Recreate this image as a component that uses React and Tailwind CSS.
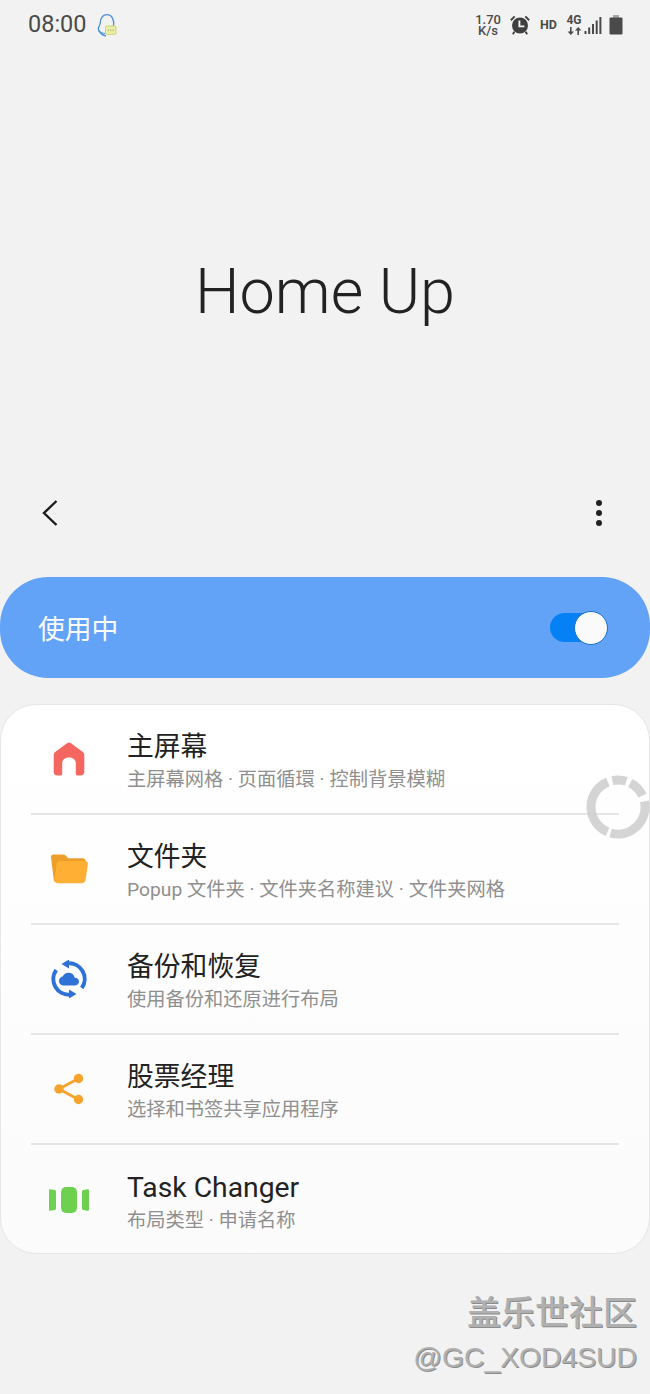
function NotifyIcon() {
  return (
    <svg width="21" height="24" viewBox="0 0 21 24" fill="none">
      <path d="M16.500 13C17.500 7 15 1.700 10 1.700 5 1.700 3.500 6 3.200 10 3 12.500 1.500 14 1.300 15.500 1 17.500 2.500 19 3.500 20 5 22 7 22.500 9 23" stroke="#4a8fd8" strokeWidth="1.300" />
      <path d="M1.500 17c1.500 1.800 3.500 3.200 6.500 3.500" stroke="#3ea6c8" strokeWidth="1" />
      <rect x="8.500" y="13" width="10.500" height="8.300" rx="1.200" fill="#e9eea8" stroke="#cdd370" strokeWidth="1" />
      <circle cx="11.400" cy="17.200" r=".6" fill="#9aa04e" />
      <circle cx="13.700" cy="17.200" r=".6" fill="#9aa04e" />
      <circle cx="16" cy="17.200" r=".6" fill="#9aa04e" />
    </svg>
  );
}

function AlarmIcon() {
  return (
    <svg width="22" height="22" viewBox="0 0 22 22" fill="#3f3f3f">
      <circle cx="11" cy="11.500" r="8" />
      <path d="M1.200 5.600 5 1.800l1.300 1.300-3.800 3.800zM20.800 5.600 17 1.800l-1.300 1.300 3.800 3.800zM4.600 17.200l1.600 1.200-1.800 2.400-1.300-1zM17.400 17.200l-1.600 1.200 1.800 2.400 1.300-1z" />
      <path d="M10.400 6.600v5.800h5" fill="none" stroke="#f2f2f2" strokeWidth="1.900" />
    </svg>
  );
}

function DataArrows() {
  return (
    <svg width="15" height="8" viewBox="0 0 15 8" fill="#4a4a4a">
      <path d="M3 0h1.600v4.500H7L3.800 8 .6 4.500H3zM10.400 8h1.600V3.500h2.400L11.200 0 8 3.500h2.400z" />
    </svg>
  );
}

function SignalIcon() {
  return (
    <svg width="18" height="19" viewBox="0 0 18 19" fill="#4a4a4a">
      <rect x="0.500" y="15" width="2" height="3" />
      <rect x="4.200" y="11.500" width="2" height="6.500" />
      <rect x="8" y="8" width="2" height="10" />
      <rect x="11.700" y="4.500" width="2" height="13.500" />
      <rect x="15.400" y="1" width="2" height="17" />
    </svg>
  );
}

function BatteryIcon() {
  return (
    <svg width="14" height="20" viewBox="0 0 14 20">
      <rect x="4" y="0" width="6" height="3" fill="#a8a8a8" />
      <rect x="0.500" y="2.500" width="13" height="17" rx="1" fill="#4a4a4a" />
    </svg>
  );
}

function StatusBar() {
  return (
    <div className="flex h-[50px] items-center justify-between pl-[28px] pr-[27px]">
      <div className="flex items-center gap-[10px]">
        <span className="font-['Roboto'] text-[23.5px] text-[#4a4a4a]">08:00</span>
        <NotifyIcon />
      </div>
      <div className="flex items-center">
        <div className="flex w-[26px] flex-col items-center font-['Roboto'] text-[13px] leading-[11.5px] font-medium text-[#4a4a4a]">
          <span>1.70</span>
          <span>K/s</span>
        </div>
        <div className="ml-[8px]"><AlarmIcon /></div>
        <span className="ml-[9px] font-['Roboto'] text-[12.5px] font-bold text-[#4a4a4a]">HD</span>
        <div className="ml-[9px] flex w-[16px] flex-col items-center gap-[1px] font-['Roboto'] text-[12px] leading-[11px] font-bold text-[#4a4a4a]">
          <span>4G</span>
          <DataArrows />
        </div>
        <div className="ml-[2px]"><SignalIcon /></div>
        <div className="ml-[7px]"><BatteryIcon /></div>
      </div>
    </div>
  );
}

function HomeIcon() {
  return (
    <svg width="32" height="36" viewBox="0 0 32 36">
      <path d="M16 1.500c.8 0 1.400.3 2 .8l11.500 8.400c1.200.9 1.800 2 1.800 3.500v16.600c0 2.200-1.500 3.700-3.700 3.700h-3.100c-1 0-1.700-.7-1.700-1.700V22c0-3-2.400-5.500-6.800-5.500S9.200 19 9.200 22v10.800c0 1-.7 1.700-1.700 1.700H4.400C2.200 34.500.7 33 .7 30.800V14.200c0-1.500.6-2.600 1.800-3.500L14 2.300c.6-.5 1.200-.8 2-.8z" fill="#f4665f" />
    </svg>
  );
}

function FolderIcon() {
  return (
    <svg width="38" height="30" viewBox="0 0 38 30">
      <path d="M1 3.500C.8 1.500 2 .5 3.500.5H13c1.500 0 2.500.7 3.500 1.800l1.700 2H33c1.500 0 2.500 1 2.600 2.500L36 10 6 28C4.500 28 4 27 3.800 26z" fill="#ed9f2c" />
      <path d="M6.500 10.500C6.800 8.200 8 7 10 7h25c2 0 3.200 1.300 2.900 3.300l-2.300 15.500c-.4 2.200-1.700 3.400-3.800 3.400H7.800c-2 0-3.200-1.200-3-3.200z" fill="#ffb034" />
    </svg>
  );
}

function BackupIcon() {
  return (
    <svg width="38" height="38" viewBox="0 0 38 38">
      <path d="M18 3.400A15.600 15.600 0 0 1 31.800 28" fill="none" stroke="#2e72d8" strokeWidth="4" />
      <path d="M20 34.600A15.600 15.600 0 0 1 6.200 10" fill="none" stroke="#2e72d8" strokeWidth="4" />
      <path d="M19 -0.500v9L11.500 4zM19 38.500v-9l7.500 4.500z" fill="#2e72d8" />
      <path d="M14 25.500c-3 0-5-2.100-5-4.600 0-2.300 1.600-4 3.700-4.400.8-2.300 3.200-3.800 5.800-3.800 3.200 0 5.500 2 6.100 4.800 2.500.2 4.400 1.800 4.400 4 0 2.500-2.100 4-4.700 4z" fill="#2e72d8" />
    </svg>
  );
}

function ShareIcon() {
  return (
    <svg width="30" height="32" viewBox="0 0 30 32">
      <path d="M24.500 5.500 5 16l19.500 10.500" fill="none" stroke="#f5a32b" strokeWidth="2.800" />
      <circle cx="24.500" cy="5.500" r="4.700" fill="#f5a32b" />
      <circle cx="5" cy="16" r="4.700" fill="#f5a32b" />
      <circle cx="24.500" cy="26.500" r="4.700" fill="#f5a32b" />
    </svg>
  );
}

function TaskIcon() {
  return (
    <svg width="40" height="26" viewBox="0 0 40 26" fill="#6ed04f">
      <path d="M0 3.500C0 2.500.7 2 1.600 2.200l4.200.8c.7.100 1.200.7 1.200 1.500v17c0 .8-.5 1.400-1.200 1.500l-4.200.8C.7 24 0 23.500 0 22.500z" />
      <rect x="12" y="0" width="16" height="26" rx="5" />
      <path d="M40 3.500c0-1-.7-1.500-1.600-1.300l-4.200.8c-.7.100-1.200.7-1.200 1.500v17c0 .8.500 1.400 1.200 1.500l4.200.8c.9.200 1.600-.3 1.600-1.300z" />
    </svg>
  );
}

const rows = [
  { icon: <HomeIcon />, title: '主屏幕', sub: '主屏幕网格 · 页面循環 · 控制背景模糊' },
  { icon: <FolderIcon />, title: '文件夹', sub: 'Popup 文件夹 · 文件夹名称建议 · 文件夹网格' },
  { icon: <BackupIcon />, title: '备份和恢复', sub: '使用备份和还原进行布局' },
  { icon: <ShareIcon />, title: '股票经理', sub: '选择和书签共享应用程序' },
  { icon: <TaskIcon />, title: 'Task Changer', sub: '布局类型 · 申请名称', latin: true },
];

function SettingRow({ row, last }) {
  return (
    <div className={`mx-[30px] flex h-[110px] items-center ${last ? '' : 'border-b-2 border-[#e6e6e6]'}`}>
      <div className="flex w-[78px] shrink-0 justify-center pr-[2px]">{row.icon}</div>
      <div className="ml-[18px] flex flex-col pt-[3px]">
        <span className={`${row.latin ? 'text-[28.3px]' : 'text-[26.8px]'} leading-[36px] text-[#222222]`}>{row.title}</span>
        <span className="mt-[2px] text-[19.25px] leading-[26px] text-[#8f8f8f]">{row.sub}</span>
      </div>
    </div>
  );
}

// clockwise from the top, centre 32,35
function arc(from, to) {
  const r = 27;
  const point = (deg) => {
    const a = (deg * Math.PI) / 180;
    return `${32 + r * Math.sin(a)} ${35 - r * Math.cos(a)}`;
  };
  const large = (to - from + 360) % 360 > 180 ? 1 : 0;
  return `M${point(from)}A${r} ${r} 0 ${large} 1 ${point(to)}`;
}

// refresh spinner floating over the card edge
function Spinner() {
  return (
    <svg className="absolute left-[586px] top-[772px] opacity-85" width="64" height="70" viewBox="0 0 64 70" fill="none" stroke="#cdcdcd" strokeWidth="9">
      <path d={arc(203, 338)} />
      <path d={arc(78, 196)} />
      <path d={arc(348, 18)} />
      <path d={arc(27, 65)} />
    </svg>
  );
}

export default function App() {
  return (
    <div className="relative h-[1394px] w-[650px] overflow-hidden bg-[#f2f2f2] font-['Roboto','Noto_Sans_CJK_SC',sans-serif]">
      <StatusBar />
      <div className="flex h-[441px] justify-center pt-[195px]">
        <h1 className="font-['Roboto'] text-[63px] font-light text-[#222222]">Home Up</h1>
      </div>
      <div className="flex h-[43px] items-center justify-between pl-[42px] pr-[48px]">
        <svg width="16" height="26" viewBox="0 0 16 26" fill="none" stroke="#1c1c1c" strokeWidth="2.400">
          <path d="M14.500 1 2 13l12.500 12" />
        </svg>
        <div className="flex flex-col gap-[4px]">
          <span className="size-[6px] rounded-full bg-[#222222]" />
          <span className="size-[6px] rounded-full bg-[#222222]" />
          <span className="size-[6px] rounded-full bg-[#222222]" />
        </div>
      </div>
      <div className="mt-[43px] flex h-[101px] items-center justify-between rounded-[48px] bg-[#62a3f8] pl-[38px] pr-[42px]">
        <span className="pt-[5px] text-[26.8px] text-[#fbfdff]">使用中</span>
        <div className="relative h-[34px] w-[58px]">
          <div className="absolute left-0 top-[2px] h-[29px] w-[50px] rounded-full bg-[#0680f5]" />
          <div className="absolute right-0 top-0 size-[34px] rounded-full border border-[#1a6fc4] bg-[#fafafa]" />
        </div>
      </div>
      <div className="mt-[26px] h-[550px] rounded-[36px] border border-[#e6e6e6] bg-gradient-to-b from-[#ffffff] to-[#fbfbfb]">
        {rows.map((row, i) => (
          <SettingRow key={row.title} row={row} last={i === rows.length - 1} />
        ))}
      </div>
      <Spinner />
      <div className="absolute right-[13px] top-[1291px] flex flex-col items-end text-[#b0b0b0] [text-shadow:1px_1px_0_#8c8c8c]">
        <span className="text-[34px] leading-[44px] font-medium">盖乐世社区</span>
        <span className="font-['Liberation_Sans'] text-[28.3px] leading-[44px]">@GC_XOD4SUD</span>
      </div>
    </div>
  );
}
